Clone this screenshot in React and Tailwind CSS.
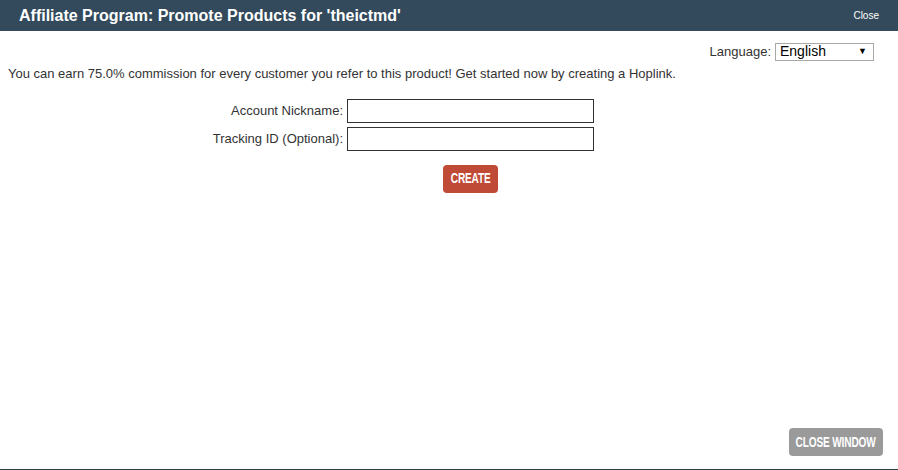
export default function App() {
  return (
    <div className="w-[898px] h-[470px] bg-white flex flex-col font-['Liberation_Sans',Arial,sans-serif] text-[#333]">
      <div className="h-[31px] bg-[#324a5b] flex items-center justify-between pl-[19px] pr-[19px] shrink-0">
        <h1 className="text-white font-bold text-[16px]">Affiliate Program: Promote Products for 'theictmd'</h1>
        <button className="text-white text-[10px]">Close</button>
      </div>
      <div className="flex-1 flex flex-col">
        <div className="flex justify-end items-center pr-[24px] pt-[11px] text-[13px] gap-[4px]">
          <span>Language:</span>
          <div className="w-[99px] h-[18px] border border-[#a9a9a9] flex items-center justify-between pl-[4px] pr-[6px] text-[14px] text-black">
            <span>English</span>
            <span className="text-[9px]">▼</span>
          </div>
        </div>
        <p className="pl-[8px] mt-[4px] text-[13px] leading-[16px]">
          You can earn 75.0% commission for every customer you refer to this product! Get started now by creating a Hoplink.
        </p>
        <div className="grid grid-cols-[343px_247px] gap-x-[4px] gap-y-[4px] mt-[17px] items-center text-[13px]">
          <label className="text-right">Account Nickname:</label>
          <input className="h-[24px] border border-[#333] outline-none" />
          <label className="text-right">Tracking ID (Optional):</label>
          <input className="h-[24px] border border-[#333] outline-none" />
        </div>
        <div className="pl-[443px] mt-[14px]">
          <button className="w-[55px] h-[28px] rounded-[4px] bg-[#bf4a36] text-white font-bold text-[14px] flex items-center justify-center overflow-hidden">
            <span className="inline-block scale-x-[0.72] tracking-[-0.2px]">CREATE</span>
          </button>
        </div>
        <div className="flex-1 flex items-end justify-end pr-[15px] pb-[13px]">
          <button className="w-[94px] h-[28px] rounded-[4px] bg-[#9a9a9a] text-white font-bold text-[14px] flex items-center justify-center overflow-hidden whitespace-nowrap">
            <span className="inline-block scale-x-[0.72] tracking-[-0.2px]">CLOSE WINDOW</span>
          </button>
        </div>
        <div className="h-[1px] bg-[#2f3d3d]" />
      </div>
    </div>
  );
}
